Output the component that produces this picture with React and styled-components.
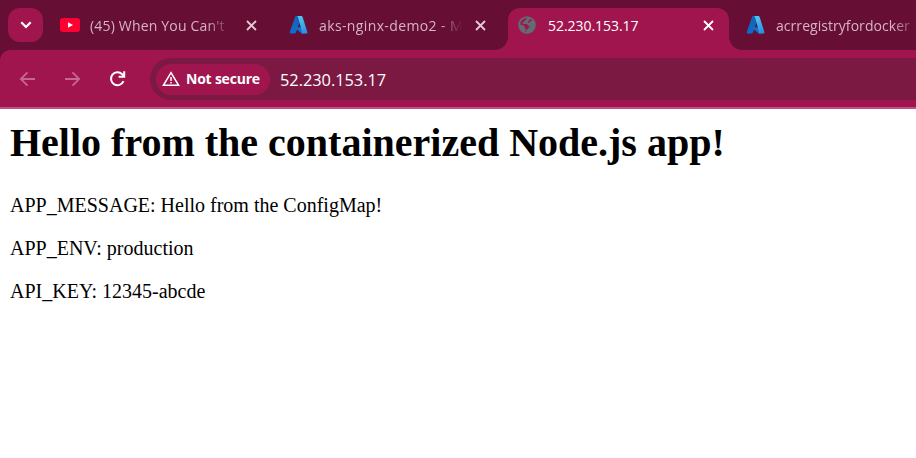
import React from "react";
import styled, { createGlobalStyle } from "styled-components";

const GlobalStyle = createGlobalStyle`
  body { margin: 0; background: #fff; overflow: hidden; }
  * { box-sizing: border-box; }
`;

const ui = `"Open Sans", "Noto Sans", sans-serif`;

const Browser = styled.div`
  width: 916px;
  height: 458px;
  overflow: hidden;
  background: #fff;
`;

const TabStrip = styled.div`
  display: flex;
  height: 50px;
  background: #660e33;
  overflow: hidden;
`;

const TabSearch = styled.button`
  flex: none;
  width: 35px;
  height: 34px;
  margin: 8px 7px 0 8px;
  padding: 0;
  border: 0;
  border-radius: 12px;
  background: #a1154f;
  display: grid;
  place-items: center;
`;

const Tab = styled.div`
  position: relative;
  flex: none;
  display: flex;
  align-items: center;
  width: ${(p) => p.$width}px;
  height: 42px;
  margin-top: 8px;
  padding: 0 ${(p) => (p.$active ? 15 : 22)}px 8px 10px;
  border-radius: 12px 12px 0 0;
  background: ${(p) => (p.$active ? "#a1154f" : "transparent")};
  color: ${(p) => (p.$active ? "#fff" : "#d6b4c4")};

  &::before,
  &::after {
    content: "";
    display: ${(p) => (p.$active ? "block" : "none")};
    position: absolute;
    bottom: 0;
    width: 13px;
    height: 13px;
  }
  &::before {
    left: -13px;
    background: radial-gradient(circle at 0 0, transparent 12.5px, #a1154f 13.2px);
  }
  &::after {
    right: -13px;
    background: radial-gradient(circle at 100% 0, transparent 12.5px, #a1154f 13.2px);
  }
`;

const LastTab = styled(Tab)`
  margin-left: 7px;
`;

const Favicon = styled.span`
  flex: none;
  display: flex;
  width: 20px;
  height: 20px;
  margin-right: 10px;
`;

const TabTitle = styled.span`
  flex: none;
  width: ${(p) => p.$width}px;
  margin-top: 2px;
  white-space: nowrap;
  font: 400 14px/20px ${ui};
  letter-spacing: ${(p) => p.$spacing || 0}px;
  ${(p) => p.$fade && `mask-image: linear-gradient(to right, #000 calc(100% - ${p.$fade}px), transparent);`}
`;

const Close = styled.span`
  display: flex;
  margin-left: auto;
  color: ${(p) => (p.$active ? "#fff" : "#e4ccd7")};
`;

const ToolbarWrap = styled.div`
  background: #660e33;
`;

const Toolbar = styled.div`
  display: flex;
  align-items: center;
  height: 59px;
  padding: 1px 0 0 17px;
  background: #a1154f;
  border-bottom: 2px solid #c0527f;
  border-top-left-radius: 10px;
`;

const NavButton = styled.span`
  display: flex;
  width: 20px;
  height: 20px;
  margin-right: 25px;
  color: ${(p) => (p.$disabled ? "#c4688f" : "#fff")};
`;

const AddressBar = styled.div`
  flex: 1;
  display: flex;
  align-items: center;
  height: 42px;
  margin-left: -2px;
  padding-left: 6px;
  border-radius: 21px 0 0 21px;
  background: #7c1942;
`;

const SecurityChip = styled.div`
  display: flex;
  align-items: center;
  width: 114px;
  height: 31px;
  padding-left: 6px;
  gap: 6px;
  border-radius: 16px;
  background: #a1154f;
  color: #fff;
  font: 700 14px/20px ${ui};
  letter-spacing: -0.22px;
  white-space: nowrap;
`;

const Url = styled.span`
  margin: 2px 0 0 10px;
  color: #fff;
  font: 400 16.4px/24px ${ui};
  letter-spacing: -0.04px;
`;

const Page = styled.main`
  padding: 11px 10px;
  color: #000;
  font-family: "Liberation Serif", "Times New Roman", serif;
`;

const Heading = styled.h1`
  margin: 0 0 28px;
  font-size: 40px;
  line-height: 46px;
  white-space: nowrap;
`;

const Line = styled.p`
  margin: 0 0 20px;
  font-size: 20px;
  line-height: 23px;
`;

const CloseIcon = () => (
  <svg width="11" height="11" viewBox="0 0 11 11" stroke="currentColor" strokeWidth="1.8">
    <path d="M1 1l9 9M10 1l-9 9" />
  </svg>
);

const YouTubeIcon = () => (
  <svg width="20" height="20" viewBox="0 0 20 20">
    <rect y="3" width="20" height="14" rx="3" fill="#ff0033" />
    <path d="M8 7.300v5.400l5-2.700z" fill="#fff" />
  </svg>
);

const AzureIcon = ({ id }) => (
  <svg width="20" height="20" viewBox="0 0 20 20">
    <defs>
      <linearGradient id={id} x1="0.6" y1="0" x2="0.3" y2="1">
        <stop offset="0" stopColor="#1b5fae" />
        <stop offset="1" stopColor="#0a6fd0" />
      </linearGradient>
      <linearGradient id={id + "r"} x1="0.3" y1="0" x2="0.7" y2="1">
        <stop offset="0" stopColor="#4fc8f4" />
        <stop offset="1" stopColor="#2b8fe0" />
      </linearGradient>
    </defs>
    <path d="M7 1h6L7 17.300q-.5 1.200-2 1.200H1.600Q.4 18.300.8 17L6 2q.3-1 1-1z" fill={`url(#${id})`} />
    <path d="M5.500 12.300h8.500l2 6.200H12.500z" fill="#0a73d1" />
    <path d="M7.500 1h4.800q1 0 1.400 1.200l4.700 14.800q.4 1.500-1 1.500h-5q1-.4.6-1.700L9 2q-.4-1-1.500-1z" fill={`url(#${id}r)`} />
  </svg>
);

const GlobeIcon = () => (
  <svg width="20" height="20" viewBox="0 0 20 20">
    <circle cx="9" cy="10" r="7.900" fill="none" stroke="#626c71" strokeWidth="1.800" />
    <path transform="translate(-1 0)" d="M11 2c-2 1-1 3-3 3.300C7 5.500 7.500 7 6 7.300 5.300 7.600 5.500 9 6.500 9h3c1.500 0 1 2 2.500 2 1 0 1 1 0 1.500-1.500.5-.5 1.500-2 2-1 .4-1 2-1 3.500 6 .5 9-4 9-8 0-2-.8-4-2-5.500-.5 2-2.500 1-3 2.500-.3 1-2 1-2 0 0-1.500 2-1 2-2.500 0-1-1-1.500-2-2.500zM2 9.500c2 0 4 .5 5 1.500s.5 2 1.500 2.500-.5 2-.500 4C4.500 17 2 14 2 9.500z" fill="#626c71" />
  </svg>
);

const Arrow = ({ forward }) => (
  <svg width="20" height="20" viewBox="0 0 20 20" fill="none" stroke="currentColor" strokeWidth="1.800">
    <path d={forward ? "M3 10h14M10.500 3.300L17.200 10l-6.700 6.700" : "M18 10H4M10.500 3.300L3.800 10l6.700 6.700"} />
  </svg>
);

const ReloadIcon = () => (
  <svg width="20" height="20" viewBox="0 0 20 20" fill="none" stroke="currentColor" strokeWidth="2">
    <path d="M16.500 12.200A6.500 6.500 0 1 1 15.200 5.200L17.200 7.500" />
    <path d="M17.200 2.200V7.800h-5.600" />
  </svg>
);

const WarningIcon = () => (
  <svg width="18" height="16" viewBox="0 0 18 16" fill="none" stroke="currentColor" strokeWidth="1.500">
    <path d="M9 1.700L16.600 14.300H1.400z" />
    <path d="M9 6v4M9 11v1.600" />
  </svg>
);

export default function App() {
  return (
    <Browser>
      <GlobalStyle />
      <TabStrip>
        <TabSearch aria-label="Search tabs">
          <svg width="12" height="8" viewBox="0 0 12 8" fill="none" stroke="#fff" strokeWidth="2.200">
            <path d="M1.300 1.300L6 6l4.700-4.700" />
          </svg>
        </TabSearch>
        <Tab $width={229}>
          <Favicon><YouTubeIcon /></Favicon>
          <TabTitle $width={141} $fade={24} $spacing={0.18}>(45) When You Can't</TabTitle>
          <Close><CloseIcon /></Close>
        </Tab>
        <Tab $width={229}>
          <Favicon><AzureIcon id="az1" /></Favicon>
          <TabTitle $width={143} $fade={22} $spacing={0.38}>aks-nginx-demo2 - M</TabTitle>
          <Close><CloseIcon /></Close>
        </Tab>
        <Tab $width={221} $active>
          <Favicon><GlobeIcon /></Favicon>
          <TabTitle $width={100} $spacing={-0.05}>52.230.153.17</TabTitle>
          <Close $active><CloseIcon /></Close>
        </Tab>
        <LastTab $width={229}>
          <Favicon><AzureIcon id="az2" /></Favicon>
          <TabTitle $width={143} $fade={26} $spacing={0.05}>acrregistryfordocker</TabTitle>
        </LastTab>
      </TabStrip>
      <ToolbarWrap>
        <Toolbar>
          <NavButton $disabled><Arrow /></NavButton>
          <NavButton $disabled><Arrow forward /></NavButton>
          <NavButton><ReloadIcon /></NavButton>
          <AddressBar>
            <SecurityChip><WarningIcon />Not secure</SecurityChip>
            <Url>52.230.153.17</Url>
          </AddressBar>
        </Toolbar>
      </ToolbarWrap>
      <Page>
        <Heading>Hello from the containerized Node.js app!</Heading>
        <Line>APP_MESSAGE: Hello from the ConfigMap!</Line>
        <Line>APP_ENV: production</Line>
        <Line>API_KEY: 12345-abcde</Line>
      </Page>
    </Browser>
  );
}
